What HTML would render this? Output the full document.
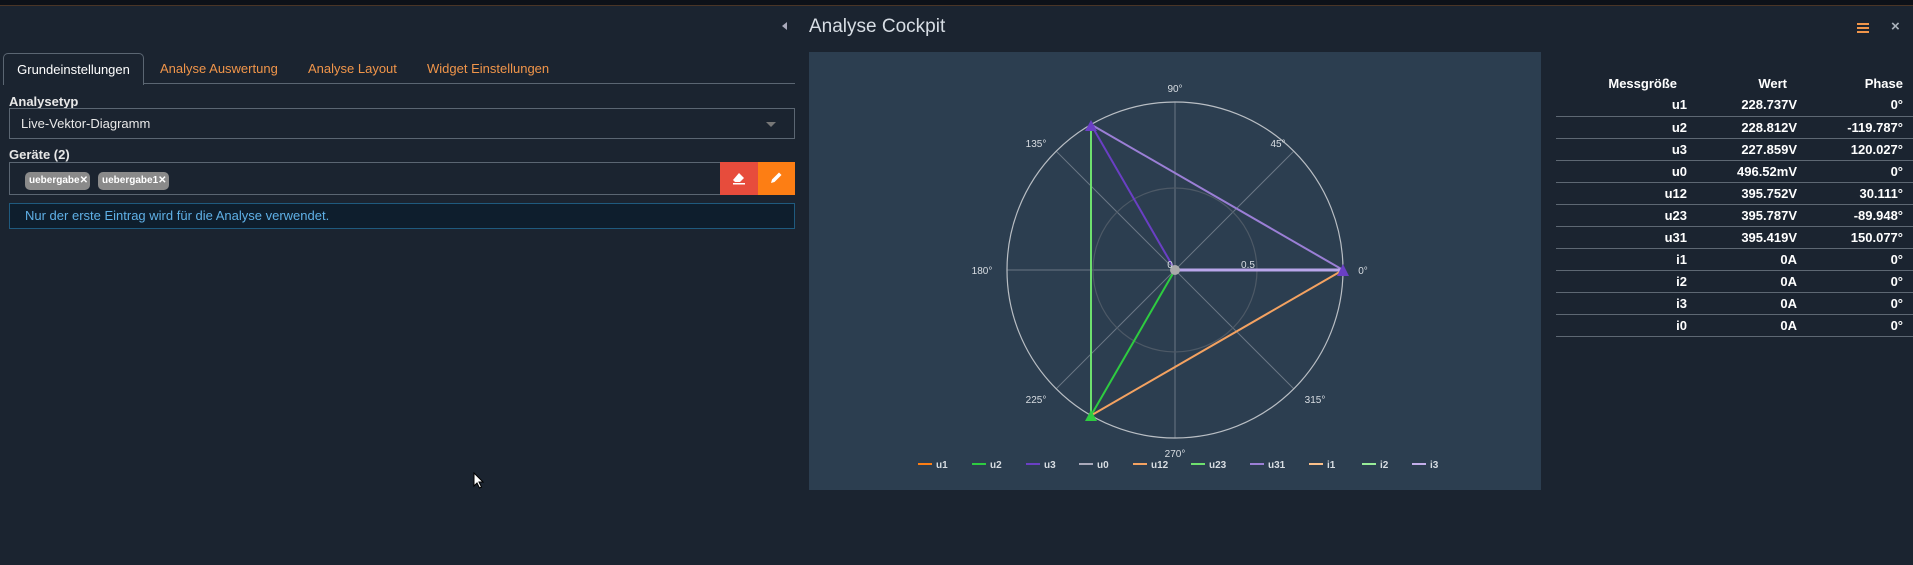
<!DOCTYPE html>
<html><head><meta charset="utf-8"><style>
*{box-sizing:border-box;margin:0;padding:0}
body{width:1913px;height:565px;background:#1b2430;font-family:"Liberation Sans",Arial,sans-serif;position:relative;overflow:hidden;color:#fff}
.a{position:absolute}
.top{left:0;top:0;width:1913px;height:6px;background:#0d1118;border-bottom:1px solid #4a3526}
.tab{top:53px;height:31px;font-size:13px;line-height:31px;color:#f0954a}
.lbl{font-size:13px;font-weight:bold;color:#e8e8e8}
.box{border:1px solid #5b6672}
.tag{top:172px;height:18px;background:#8a8a8a;border-radius:5px;font-size:10px;font-weight:bold;line-height:18px;padding-left:4px;color:#fff}
table{border-collapse:collapse}
.tb{position:absolute;left:1556px;top:72px;width:357px;font-size:13px;font-weight:bold}
.tb th{height:22px;text-align:right;padding-right:10px}
.tb td{height:22px;text-align:right;border-bottom:1px solid #5e6873}
</style></head><body>
<div class="a top"></div>
<div class="a" style="left:782px;top:22px;width:0;height:0;border-top:4px solid transparent;border-bottom:4px solid transparent;border-right:5px solid #aab"></div>
<div class="a tab" style="left:3px;width:141px;border:1px solid #5b6672;border-bottom:none;border-radius:5px 5px 0 0;color:#fff;text-align:center;background:#1b2430;z-index:2;height:32px">Grundeinstellungen</div>
<div class="a" style="left:3px;top:83px;width:792px;height:1px;background:#5b6672"></div>
<div class="a tab" style="left:160px">Analyse Auswertung</div>
<div class="a tab" style="left:308px">Analyse Layout</div>
<div class="a tab" style="left:427px">Widget Einstellungen</div>
<div class="a lbl" style="left:9px;top:94px">Analysetyp</div>
<div class="a box" style="left:9px;top:108px;width:786px;height:31px"></div>
<div class="a" style="left:21px;top:116px;font-size:13px;color:#e8e8e8">Live-Vektor-Diagramm</div>
<div class="a" style="left:766px;top:122px;width:0;height:0;border-left:5px solid transparent;border-right:5px solid transparent;border-top:5px solid #777"></div>
<div class="a lbl" style="left:9px;top:147px">Geräte (2)</div>
<div class="a box" style="left:9px;top:162px;width:712px;height:33px"></div>
<div class="a tag" style="left:25px;width:65px">uebergabe✕</div>
<div class="a tag" style="left:98px;width:71px">uebergabe1✕</div>
<div class="a" style="left:720px;top:162px;width:38px;height:33px;background:#e74c3c"></div>
<svg class="a" style="left:732px;top:172px" width="14" height="13" viewBox="0 0 14 13"><path d="M7 1 L12 6 L8 10 L3 10 L1 8 Z" fill="#fff"/><rect x="1" y="11" width="12" height="1.5" fill="#fff"/></svg>
<div class="a" style="left:758px;top:162px;width:37px;height:33px;background:#fd7e14"></div>
<svg class="a" style="left:769px;top:171px" width="14" height="14" viewBox="0 0 14 14"><path d="M2 12 L3 8.5 L10 1.5 L12.5 4 L5.5 11 Z" fill="#fff"/></svg>
<div class="a" style="left:9px;top:203px;width:786px;height:26px;background:#0e1e2d;border:1px solid #1f5a7e;color:#5fb0e6;font-size:13px;line-height:24px;padding-left:15px">Nur der erste Eintrag wird für die Analyse verwendet.</div>
<svg class="a" style="left:473px;top:472px" width="12" height="18" viewBox="0 0 12 18"><path d="M1 1 L1 14 L4 11 L6.5 16 L8.5 15 L6 10 L10 10 Z" fill="#fff" stroke="#000" stroke-width="1"/></svg>

<div class="a" style="left:809px;top:16px;font-size:19px;color:#d7dde4">Analyse Cockpit</div>
<svg class="a" style="left:1857px;top:22px" width="12" height="12" viewBox="0 0 12 12"><rect x="0" y="1" width="12" height="2" fill="#f0954a"/><rect x="0" y="5" width="12" height="2" fill="#f0954a"/><rect x="0" y="9" width="12" height="2" fill="#f0954a"/></svg>
<div class="a" style="left:1891px;top:18px;font-size:15px;color:#aab2bb;font-weight:bold">×</div>

<svg class="a" style="left:809px;top:52px" width="732" height="438" viewBox="809 52 732 438">
<rect x="809" y="52" width="732" height="438" fill="#2c3e50"/>
<g stroke="#6a7785" stroke-width="1">
<line x1="1007" y1="270" x2="1343" y2="270"/>
<line x1="1175" y1="102" x2="1175" y2="438"/>
<line x1="1056" y1="151" x2="1294" y2="389"/>
<line x1="1294" y1="151" x2="1056" y2="389"/>
</g>
<circle cx="1175" cy="270" r="82" fill="none" stroke="#4d5966" stroke-width="1.2"/>
<circle cx="1175" cy="270" r="168" fill="none" stroke="#b9bec4" stroke-width="1.2"/>
<line x1="1091" y1="124.5" x2="1091" y2="415.5" stroke="#6ee06e" stroke-width="2"/>
<line x1="1175" y1="270" x2="1091" y2="415.5" stroke="#2ecc40" stroke-width="2"/>
<line x1="1343" y1="270" x2="1091" y2="415.5" stroke="#f4a261" stroke-width="2"/>
<line x1="1091" y1="124.5" x2="1343" y2="270" stroke="#9b7fd6" stroke-width="2"/>
<line x1="1175" y1="270" x2="1091" y2="124.5" stroke="#6a3fc4" stroke-width="2"/>
<line x1="1175" y1="270" x2="1343" y2="270" stroke="#b9a6ea" stroke-width="3"/>
<polygon points="1091,120 1085,131 1097,131" fill="#6a3fc4"/>
<polygon points="1343,264 1337,276 1349,276" fill="#6a3fc4"/>
<polygon points="1091,410 1085,421 1097,421" fill="#2ecc40"/>
<circle cx="1175" cy="270" r="5" fill="#aaa"/>
<g font-family="Liberation Sans,Arial,sans-serif" font-size="10" fill="#d8dde2" text-anchor="middle">
<text x="1175" y="92">90°</text><text x="1278" y="147">45°</text><text x="1036" y="147">135°</text>
<text x="982" y="274">180°</text><text x="1363" y="274">0°</text><text x="1036" y="403">225°</text>
<text x="1315" y="403">315°</text><text x="1175" y="457">270°</text><text x="1248" y="268">0.5</text><text x="1170" y="268">0</text>
</g>
<g font-family="Liberation Sans,Arial,sans-serif" font-size="10" font-weight="bold" fill="#d8dde2">
<line x1="918" y1="464" x2="932" y2="464" stroke="#fd7e14" stroke-width="2"/><text x="936" y="468">u1</text>
<line x1="972" y1="464" x2="986" y2="464" stroke="#2ecc40" stroke-width="2"/><text x="990" y="468">u2</text>
<line x1="1026" y1="464" x2="1040" y2="464" stroke="#6a3fc4" stroke-width="2"/><text x="1044" y="468">u3</text>
<line x1="1079" y1="464" x2="1093" y2="464" stroke="#aab" stroke-width="2"/><text x="1097" y="468">u0</text>
<line x1="1133" y1="464" x2="1147" y2="464" stroke="#f4a261" stroke-width="2"/><text x="1151" y="468">u12</text>
<line x1="1191" y1="464" x2="1205" y2="464" stroke="#6ee06e" stroke-width="2"/><text x="1209" y="468">u23</text>
<line x1="1250" y1="464" x2="1264" y2="464" stroke="#9b7fd6" stroke-width="2"/><text x="1268" y="468">u31</text>
<line x1="1309" y1="464" x2="1323" y2="464" stroke="#fbc08a" stroke-width="2"/><text x="1327" y="468">i1</text>
<line x1="1362" y1="464" x2="1376" y2="464" stroke="#98ec98" stroke-width="2"/><text x="1380" y="468">i2</text>
<line x1="1412" y1="464" x2="1426" y2="464" stroke="#c3aeea" stroke-width="2"/><text x="1430" y="468">i3</text>
</g>
</svg>

<table class="tb">
<tr><th style="width:131px">Messgröße</th><th style="width:110px">Wert</th><th>Phase</th></tr>
<tr><td>u1</td><td>228.737V</td><td style="padding-right:10px">0°</td></tr>
<tr><td>u2</td><td>228.812V</td><td style="padding-right:10px">-119.787°</td></tr>
<tr><td>u3</td><td>227.859V</td><td style="padding-right:10px">120.027°</td></tr>
<tr><td>u0</td><td>496.52mV</td><td style="padding-right:10px">0°</td></tr>
<tr><td>u12</td><td>395.752V</td><td style="padding-right:10px">30.111°</td></tr>
<tr><td>u23</td><td>395.787V</td><td style="padding-right:10px">-89.948°</td></tr>
<tr><td>u31</td><td>395.419V</td><td style="padding-right:10px">150.077°</td></tr>
<tr><td>i1</td><td>0A</td><td style="padding-right:10px">0°</td></tr>
<tr><td>i2</td><td>0A</td><td style="padding-right:10px">0°</td></tr>
<tr><td>i3</td><td>0A</td><td style="padding-right:10px">0°</td></tr>
<tr><td>i0</td><td>0A</td><td style="padding-right:10px">0°</td></tr>
</table>
</body></html>
